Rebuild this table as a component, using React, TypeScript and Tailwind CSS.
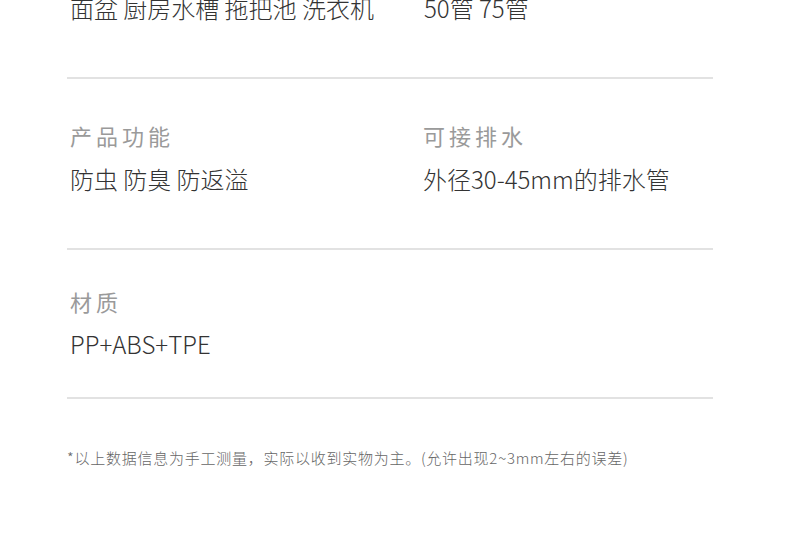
import React from "react";

const font = { fontFamily: '"Noto Sans CJK SC", "Noto Sans", sans-serif' };

function Label({ children }: { children: React.ReactNode }) {
  return (
    <div className="text-[22px] leading-[30px] font-normal tracking-[4px] text-[#9a9a9a]">
      {children}
    </div>
  );
}

function Value({ children }: { children: React.ReactNode }) {
  return <div className="text-[24px] leading-[34px] font-light text-[#333333]">{children}</div>;
}

function Divider() {
  return <div className="h-[2px] bg-[#e2e2e2]" />;
}

export default function App() {
  return (
    <div className="w-[790px] h-[535px] bg-white overflow-hidden" style={font}>
      <div className="ml-[67px] w-[646px]">
        {/* Row 0 (cut off) */}
        <div className="mt-[-9px] grid grid-cols-[354px_1fr] pl-[3px]">
          <Value>面盆 厨房水槽 拖把池 洗衣机</Value>
          <Value>50管 75管</Value>
        </div>
        <div className="mt-[52px]">
          <Divider />
        </div>

        {/* Section 1 */}
        <div className="pt-[41px] pb-[52px] grid grid-cols-[353px_1fr] pl-[3px]">
          <div className="flex flex-col gap-[12px]">
            <Label>产品功能</Label>
            <Value>防虫 防臭 防返溢</Value>
          </div>
          <div className="flex flex-col gap-[12px]">
            <Label>可接排水</Label>
            <Value>外径30-45mm的排水管</Value>
          </div>
        </div>
        <Divider />

        {/* Section 2 */}
        <div className="pt-[36px] pb-[36px] pl-[3px] flex flex-col gap-[11px]">
          <Label>材质</Label>
          <Value>PP+ABS+TPE</Value>
        </div>
        <Divider />

        <div className="mt-[49px] text-[15px] leading-[20px] tracking-[0.75px] font-light text-[#666666]">
          *以上数据信息为手工测量，实际以收到实物为主。(允许出现2~3mm左右的误差)
        </div>
      </div>
    </div>
  );
}
